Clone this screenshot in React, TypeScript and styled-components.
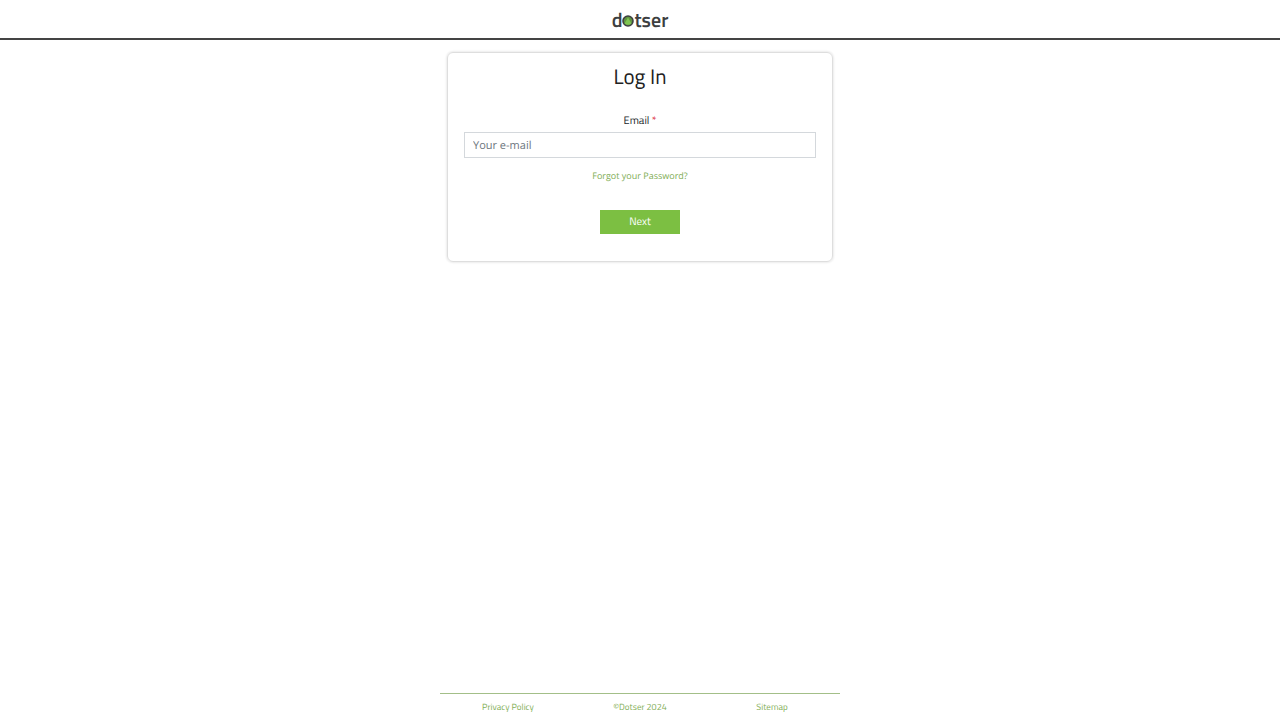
import React, { useState } from "react";
import styled, { createGlobalStyle } from "styled-components";

const heading = `"Titillium Web", Roboto, sans-serif`;
const body = `"Open Sans", "Noto Sans", sans-serif`;

const GlobalStyle = createGlobalStyle`
  *, *::before, *::after { box-sizing: border-box; }
  body {
    margin: 0;
    background: #fff;
    color: #212529;
    font-family: ${body};
    text-rendering: geometricPrecision;
  }
  input, button { text-rendering: inherit; }
`;

const Page = styled.div`
  min-height: 100vh;
  display: flex;
  flex-direction: column;
  align-items: center;
`;

const Header = styled.header`
  width: 100%;
  height: 40px;
  padding-top: 2px;
  display: flex;
  align-items: center;
  justify-content: center;
  border-bottom: 2px solid #444;
`;

const Logo = styled.a`
  display: flex;
  align-items: baseline;
  color: #3d3f41;
  font: 600 20px/24px ${heading};
  text-decoration: none;
`;

const LogoDot = styled.svg`
  width: 12px;
  height: 12px;
  align-self: flex-end;
  margin-bottom: 5px;
`;

const Main = styled.main`
  flex: 1;
  width: 100%;
  max-width: 386px;
  padding-top: 12px;
`;

const Card = styled.form`
  display: flex;
  flex-direction: column;
  align-items: center;
  padding: 8px 16px 27px;
  border: 1px solid #dedede;
  border-radius: 6px;
  box-shadow: 0 0 2px 1px #ececec;
`;

const Title = styled.h1`
  margin: 0 0 20px;
  color: #212121;
  font: 400 21px/32px ${heading};
`;

const Label = styled.label`
  margin-bottom: 3px;
  font: 400 11px/16px ${heading};
`;

const Required = styled.span`
  color: #dc3545;
`;

const EmailInput = styled.input`
  width: 100%;
  height: 26px;
  padding: 0 8px;
  border: 1px solid #d4d8dc;
  border-radius: 0;
  background: #fff;
  color: #495057;
  font: 400 11px/16px ${body};
  &::placeholder { color: #6c757d; opacity: 1; }
`;

const ForgotLink = styled.a`
  margin: 10px 0 26px;
  color: #7fae56;
  font: 400 9px/16px ${body};
  text-decoration: none;
`;

const NextButton = styled.button`
  width: 80px;
  height: 24px;
  padding: 0;
  border: 0;
  background: #7cbf42;
  color: #fff;
  font: 400 11px/24px ${heading};
  cursor: pointer;
`;

const Footer = styled.footer`
  width: 100%;
  max-width: 400px;
  display: grid;
  grid-template-columns: repeat(3, 1fr);
  padding: 6px 2px 4px;
  border-top: 1px solid #a3bf88;
  text-align: center;
`;

const FooterLink = styled.a`
  color: #7fae56;
  font: 400 9px/16px ${heading};
  text-decoration: none;
`;

export default function App() {
  const [email, setEmail] = useState("");
  return (
    <Page>
      <GlobalStyle />
      <Header>
        <Logo href="#" aria-label="dotser">
          <span>d</span>
          <LogoDot viewBox="0 0 12 12" aria-hidden="true">
            <circle cx="6" cy="6" r="5" fill="#5f9440" stroke="#3d3f41" strokeWidth="1.6" />
            <path d="M2.5 8.5 6 2.5l3.5 6Q6 11 2.5 8.5Z" fill="#7fc552" />
          </LogoDot>
          <span>tser</span>
        </Logo>
      </Header>
      <Main>
        <Card onSubmit={(e) => e.preventDefault()}>
          <Title>Log In</Title>
          <Label htmlFor="email">
            Email <Required>*</Required>
          </Label>
          <EmailInput
            id="email"
            type="email"
            placeholder="Your e-mail"
            value={email}
            onChange={(e) => setEmail(e.target.value)}
          />
          <ForgotLink href="#">Forgot your Password?</ForgotLink>
          <NextButton type="submit">Next</NextButton>
        </Card>
      </Main>
      <Footer>
        <FooterLink href="#">Privacy Policy</FooterLink>
        <FooterLink href="#">©Dotser 2024</FooterLink>
        <FooterLink href="#">Sitemap</FooterLink>
      </Footer>
    </Page>
  );
}
